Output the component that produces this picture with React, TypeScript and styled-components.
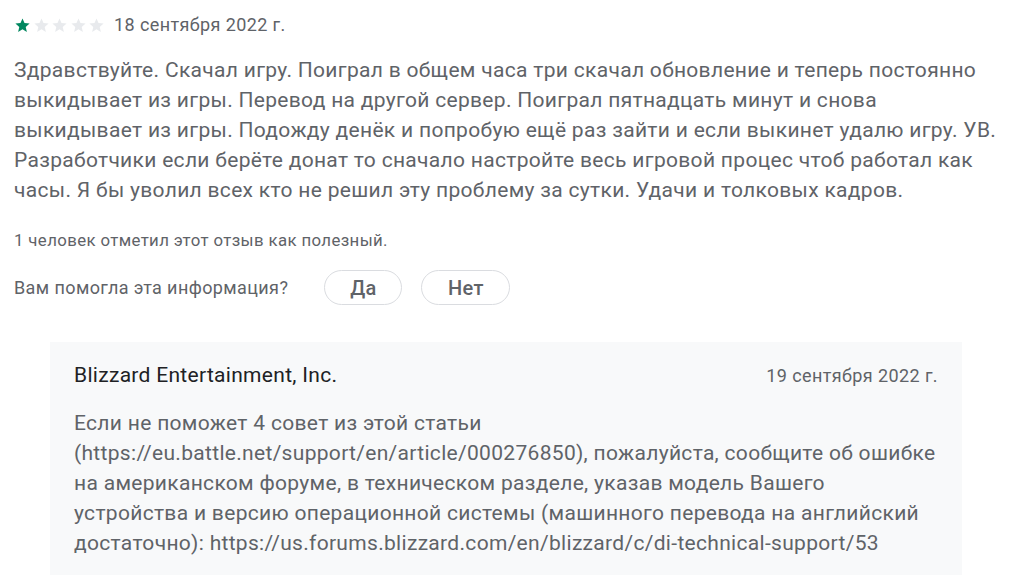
import React from "react";
import styled, { createGlobalStyle } from "styled-components";

const GlobalStyle = createGlobalStyle`
  html, body {
    margin: 0;
    padding: 0;
    background: #ffffff;
  }
  body {
    font-family: Roboto, "Noto Sans", Arial, sans-serif;
    -webkit-font-smoothing: antialiased;
  }
`;

const Page = styled.div`
  width: 1011px;
  height: 575px;
  overflow: hidden;
  box-sizing: border-box;
  padding: 11px 28px 0 14px;
`;

const Header = styled.div`
  display: flex;
  align-items: center;
  height: 28px;
  gap: 9px;
`;

const Stars = styled.div`
  display: flex;
  align-items: center;
  gap: 1.5px;
`;

const DateText = styled.span`
  font-size: 18px;
  line-height: 24px;
  letter-spacing: 0.4px;
  color: #5f6368;
`;

// the lines are kept as in the original layout
const ReviewText = styled.p`
  margin: 16px 0 0;
  font-size: 21px;
  line-height: 30px;
  letter-spacing: 0.31px;
  color: #5f6368;
  white-space: pre;
`;

const Helpful = styled.div`
  margin-top: 24px;
  font-size: 16.8px;
  line-height: 22.4px;
  letter-spacing: 0.38px;
  color: #5f6368;
`;

const VoteRow = styled.div`
  display: flex;
  align-items: center;
  margin-top: 18.6px;
`;

const VoteLabel = styled.span`
  font-size: 18px;
  line-height: 24px;
  letter-spacing: 0.4px;
  color: #5f6368;
  margin-right: 36px;
`;

const VoteButton = styled.button<{ $width: number }>`
  box-sizing: border-box;
  width: ${(p) => p.$width}px;
  height: 35px;
  margin-right: 19px;
  border: 1px solid #dadce0;
  border-radius: 18px;
  background: #ffffff;
  font-family: Roboto, Arial, sans-serif;
  font-size: 20px;
  font-weight: 500;
  letter-spacing: 0.3px;
  color: #5f6368;
  padding: 0;
  cursor: pointer;
`;

const Reply = styled.div`
  margin: 37px 21px 0 36px;
  background: #f8f9fa;
  padding: 18px 24px 27px 24px;
`;

const ReplyHeader = styled.div`
  display: flex;
  justify-content: space-between;
  align-items: baseline;
`;

const Developer = styled.span`
  font-size: 21px;
  line-height: 30px;
  letter-spacing: 0.3px;
  color: #202124;
`;

const ReplyText = styled.p`
  margin: 18px 0 0;
  font-size: 21px;
  line-height: 30px;
  letter-spacing: 0.31px;
  color: #5f6368;
  white-space: pre;
`;

const review = [
  "Здравствуйте. Скачал игру. Поиграл в общем часа три скачал обновление и теперь постоянно",
  "выкидывает из игры. Перевод на другой сервер. Поиграл пятнадцать минут и снова",
  "выкидывает из игры. Подожду денёк и попробую ещё раз зайти и если выкинет удалю игру. УВ.",
  "Разработчики если берёте донат то сначало настройте весь игровой процес чтоб работал как",
  "часы. Я бы уволил всех кто не решил эту проблему за сутки. Удачи и толковых кадров.",
];

const reply = [
  "Если не поможет 4 совет из этой статьи",
  "(https://eu.battle.net/support/en/article/000276850), пожалуйста, сообщите об ошибке",
  "на американском форуме, в техническом разделе, указав модель Вашего",
  "устройства и версию операционной системы (машинного перевода на английский",
  "достаточно): https://us.forums.blizzard.com/en/blizzard/c/di-technical-support/53",
];

function Star({ filled }: { filled: boolean }) {
  return (
    <svg width="17" height="17" viewBox="0 0 24 24">
      <path
        d="M12 17.27L18.18 21l-1.64-7.03L22 9.24l-7.19-.61L12 2 9.19 8.63 2 9.24l5.46 4.73L5.82 21z"
        fill={filled ? "#01875f" : "#e8eaed"}
      />
    </svg>
  );
}

export default function App() {
  const rating = 1;
  return (
    <>
      <GlobalStyle />
      <Page>
        <Header>
          <Stars>
            {[0, 1, 2, 3, 4].map((i) => (
              <Star key={i} filled={i < rating} />
            ))}
          </Stars>
          <DateText>18 сентября 2022 г.</DateText>
        </Header>
        <ReviewText>{review.join("\n")}</ReviewText>
        <Helpful>1 человек отметил этот отзыв как полезный.</Helpful>
        <VoteRow>
          <VoteLabel>Вам помогла эта информация?</VoteLabel>
          <VoteButton $width={78}>Да</VoteButton>
          <VoteButton $width={89}>Нет</VoteButton>
        </VoteRow>
        <Reply>
          <ReplyHeader>
            <Developer>Blizzard Entertainment, Inc.</Developer>
            <DateText>19 сентября 2022 г.</DateText>
          </ReplyHeader>
          <ReplyText>{reply.join("\n")}</ReplyText>
        </Reply>
      </Page>
    </>
  );
}
